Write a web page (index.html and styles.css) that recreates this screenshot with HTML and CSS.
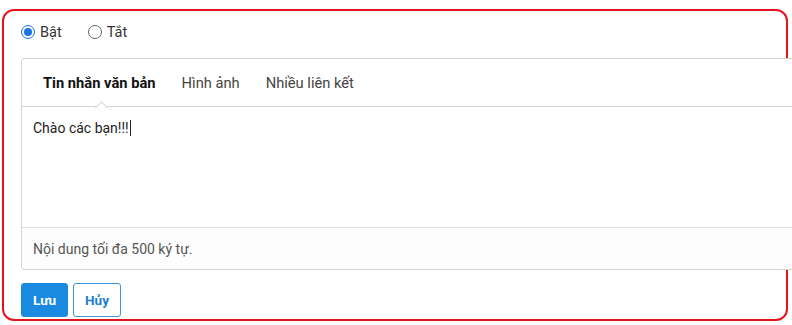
FILE: index.html
```html
<!DOCTYPE html>
<html lang="vi">
<head>
    <meta charset="UTF-8">
    <meta name="viewport" content="width=device-width, initial-scale=1.0">
    <title>Tin nhắn</title>
    <link rel="stylesheet" href="styles.css">
</head>
<body>
    <div class="frame">
        <div class="radio-row">
            <label class="radio"><span class="dot checked"></span>Bật</label>
            <label class="radio"><span class="dot"></span>Tắt</label>
        </div>

        <div class="card">
            <div class="tabs">
                <div class="tab active">Tin nhắn văn bản</div>
                <div class="tab">Hình ảnh</div>
                <div class="tab">Nhiều liên kết</div>
            </div>
            <div class="editor">Chào các bạn!!!<span class="caret"></span></div>
            <div class="hint">Nội dung tối đa 500 ký tự.</div>
        </div>

        <div class="actions">
            <button class="btn primary">Lưu</button>
            <button class="btn outline">Hủy</button>
        </div>
    </div>
</body>
</html>
```

FILE: styles.css
```css
html, body { margin: 0; padding: 0; overflow: hidden; background: #fff; }
body { font-family: Roboto, "Noto Sans", Arial, sans-serif; font-size: 14px; color: #222; }

.frame { box-sizing: border-box; margin: 9px 0 0 2px; width: 786px; height: 312px; border: 2px solid #e3141b; border-radius: 12px; padding: 0 0 0 17px; }

.radio-row { display: flex; align-items: center; gap: 26px; margin-top: 12px; height: 18px; color: #333; font-size: 14.5px; }
.radio { display: flex; align-items: center; gap: 5px; }
.dot { box-sizing: border-box; width: 14px; height: 14px; border: 1px solid #666; border-radius: 50%; display: flex; align-items: center; justify-content: center; }
.dot.checked { border-color: #1a73e8; }
.dot.checked::after { content: ""; width: 8px; height: 8px; border-radius: 50%; background: #1a73e8; }

.card { margin-top: 17px; width: 772px; border: 1px solid #d4d4d4; border-right: 0; border-radius: 4px 0 0 4px; background: #fff; }

.tabs { display: flex; height: 47px; align-items: center; padding-left: 8px; border-bottom: 1px solid #d4d4d4; font-size: 14.7px; }
.tab { position: relative; padding: 0 13px; color: #444; }
.tab.active { font-weight: bold; color: #111; }
.tab.active::after { content: ""; position: absolute; left: 67px; bottom: -20px; width: 8px; height: 8px; background: #fff; border-top: 1px solid #d4d4d4; border-left: 1px solid #d4d4d4; transform: rotate(45deg); }

.editor { height: 107px; padding: 13px 11px 0; color: #222; }
.caret { display: inline-block; width: 1px; height: 16px; background: #222; vertical-align: -3px; margin-left: 1px; }

.hint { height: 41px; display: flex; align-items: center; padding: 0 11px; border-top: 1px solid #dedede; color: #555; font-size: 14px; background: #fdfdfd; border-radius: 0 0 0 4px; }

.actions { display: flex; gap: 5px; margin-top: 13px; }
.btn { box-sizing: border-box; height: 34px; padding: 0; font-family: inherit; font-size: 13.5px; font-weight: bold; border-radius: 3px; }
.btn.primary { width: 47px; background: #1a8ae0; color: #fff; border: 1px solid #1a8ae0; }
.btn.outline { width: 48px; background: #fff; color: #1a7fd0; border: 1px solid #3a95dc; }
```
